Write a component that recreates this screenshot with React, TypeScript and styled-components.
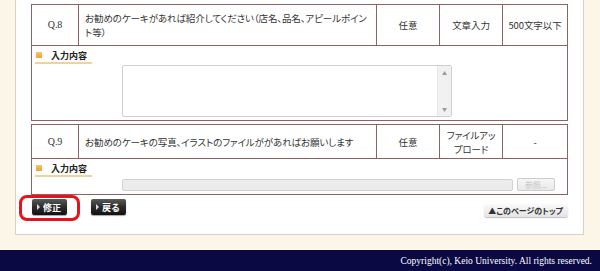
import React from "react";
import styled, { createGlobalStyle } from "styled-components";

const GlobalStyle = createGlobalStyle`
  html, body { margin: 0; padding: 0; }
  body {
    background: #fcf6e8;
    font-family: "Noto Sans CJK JP", "Noto Sans", sans-serif;
    color: #333;
    width: 600px;
    height: 271px;
    overflow: hidden;
  }
`;

const Page = styled.div`
  display: flex;
  flex-direction: column;
  width: 600px;
  height: 271px;
`;

const Main = styled.div`
  flex: 1;
  padding: 0 16px 15px 15px;
  display: flex;
`;

const Panel = styled.div`
  flex: 1;
  background: #fff;
  border: 1px solid #d6d2c6;
  border-top: none;
  padding: 4px 15px 0 15px;
  display: flex;
  flex-direction: column;
  gap: 3px;
`;

const Block = styled.div`
  border: 1px solid #8e6262;
  display: flex;
  flex-direction: column;
`;

const HeadRow = styled.div<{ $h: number }>`
  display: grid;
  grid-template-columns: 47px 298px 63px 63px 1fr;
  height: ${(p) => p.$h}px;
  border-bottom: 1px solid #8e6262;
`;

const Cell = styled.div<{ $left?: boolean; $serif?: boolean; $last?: boolean }>`
  display: flex;
  align-items: center;
  justify-content: ${(p) => (p.$left ? "flex-start" : "center")};
  text-align: ${(p) => (p.$left ? "left" : "center")};
  padding: ${(p) => (p.$left ? "0 6px" : "0 2px")};
  border-right: ${(p) => (p.$last ? "none" : "1px solid #8e6262")};
  font-family: ${(p) =>
    p.$serif ? '"Liberation Serif", serif' : '"Noto Sans CJK JP", sans-serif'};
  font-size: ${(p) => (p.$serif ? "10px" : "9.5px")};
  line-height: 14px;
  font-feature-settings: "palt";
  color: #333;
  letter-spacing: -0.1px;
`;

const Lines = styled.div`
  display: flex;
  flex-direction: column;
`;

const InputArea = styled.div`
  padding: 2px 4px 3px 3px;
  display: flex;
  flex-direction: column;
  gap: 1px;
`;

const Label = styled.div`
  display: flex;
  align-items: center;
  gap: 9px;
  width: 56px;
  height: 14px;
  padding-left: 1px;
  border-bottom: 2px solid #efd39b;
  font-size: 9px;
  font-weight: bold;
  color: #222;
  white-space: nowrap;
`;

const Square = styled.span`
  width: 6px;
  height: 6px;
  background: linear-gradient(#f7c46a, #eea23a);
  flex: none;
`;

const TextBox = styled.div`
  margin-left: 87px;
  width: 330px;
  height: 52px;
  border: 1px solid #cfcfcf;
  border-radius: 2px;
  box-sizing: border-box;
  display: flex;
  justify-content: flex-end;
`;

const ScrollBar = styled.div`
  width: 13px;
  background: #f1f1f1;
  border-left: 1px solid #e6e6e6;
  display: flex;
  flex-direction: column;
  justify-content: space-between;
  align-items: center;
  padding: 4px 0;
  font-size: 5px;
  color: #9a9a9a;
  line-height: 6px;
`;

const FileRow = styled.div`
  margin-left: 87px;
  display: flex;
  gap: 4px;
  align-items: center;
  height: 13px;
`;

const FileField = styled.div`
  width: 391px;
  height: 12px;
  background: #ececec;
  border: 1px solid #d2d2d2;
  border-radius: 2px;
  box-sizing: border-box;
`;

const BrowseButton = styled.div`
  width: 38px;
  height: 13px;
  border: 1px solid #cdcdcd;
  border-radius: 2px;
  background: linear-gradient(#f6f6f6, #e9e9e9);
  box-sizing: border-box;
  font-size: 8px;
  line-height: 11px;
  color: #c4c4c4;
  text-align: center;
`;

const Actions = styled.div`
  display: flex;
  align-items: flex-start;
  padding: 1px 0 0 1px;
  gap: 24px;
  position: relative;
`;

const DarkButton = styled.div`
  height: 16px;
  padding: 0 6px 0 5px;
  border-radius: 2px;
  background: linear-gradient(#5a5a5a, #2c2c2c 50%, #111);
  box-shadow: 0 1px 1px rgba(0, 0, 0, 0.35);
  color: #fff;
  font-size: 9px;
  font-weight: bold;
  display: flex;
  align-items: center;
  gap: 3px;
  position: relative;
`;

const Tri = styled.span`
  width: 0;
  height: 0;
  border-left: 3px solid #ddd;
  border-top: 3px solid transparent;
  border-bottom: 3px solid transparent;
`;

const Highlight = styled.div`
  position: absolute;
  left: -13px;
  top: -4px;
  width: 55px;
  height: 20px;
  border: 3px solid #e3141c;
  border-radius: 8px;
`;

const TopButton = styled.div`
  margin-left: auto;
  margin-top: 5px;
  height: 13px;
  padding: 0 5px 0 4px;
  border-radius: 3px;
  background: linear-gradient(#fafafa, #e4e4e4);
  box-shadow: 0 1px 1px rgba(0, 0, 0, 0.25);
  font-size: 8px;
  line-height: 13px;
  color: #333;
  font-weight: bold;
  font-feature-settings: "palt";
  white-space: nowrap;
`;

const Footer = styled.div`
  height: 21px;
  background: #0b0944;
  display: flex;
  align-items: center;
  justify-content: flex-end;
  padding-right: 8px;
  color: #fff;
  font-family: "Liberation Serif", serif;
  font-size: 9.5px;
`;

export default function App() {
  return (
    <>
      <GlobalStyle />
      <Page>
        <Main>
          <Panel>
            <Block>
              <HeadRow $h={40}>
                <Cell $serif>Q.8</Cell>
                <Cell $left>
                  <Lines>
                    <span>お勧めのケーキがあれば紹介してください（店名、品名、アピールポイン</span>
                    <span>ト等）</span>
                  </Lines>
                </Cell>
                <Cell>任意</Cell>
                <Cell>文章入力</Cell>
                <Cell $last>500文字以下</Cell>
              </HeadRow>
              <InputArea>
                <Label>
                  <Square />
                  入力内容
                </Label>
                <TextBox>
                  <ScrollBar>
                    <span>▲</span>
                    <span>▼</span>
                  </ScrollBar>
                </TextBox>
              </InputArea>
            </Block>
            <Block>
              <HeadRow $h={33}>
                <Cell $serif>Q.9</Cell>
                <Cell $left>お勧めのケーキの写真、イラストのファイルががあればお願いします</Cell>
                <Cell>任意</Cell>
                <Cell>
                  <Lines>
                    <span>ファイルアッ</span>
                    <span>プロード</span>
                  </Lines>
                </Cell>
                <Cell $last>-</Cell>
              </HeadRow>
              <InputArea>
                <Label>
                  <Square />
                  入力内容
                </Label>
                <FileRow>
                  <FileField />
                  <BrowseButton>参照...</BrowseButton>
                </FileRow>
              </InputArea>
            </Block>
            <Actions>
              <DarkButton>
                <Tri />
                修正
                <Highlight />
              </DarkButton>
              <DarkButton>
                <Tri />
                戻る
              </DarkButton>
              <TopButton>▲このページのトップ</TopButton>
            </Actions>
          </Panel>
        </Main>
        <Footer>Copyright(c), Keio University. All rights reserved.</Footer>
      </Page>
    </>
  );
}
